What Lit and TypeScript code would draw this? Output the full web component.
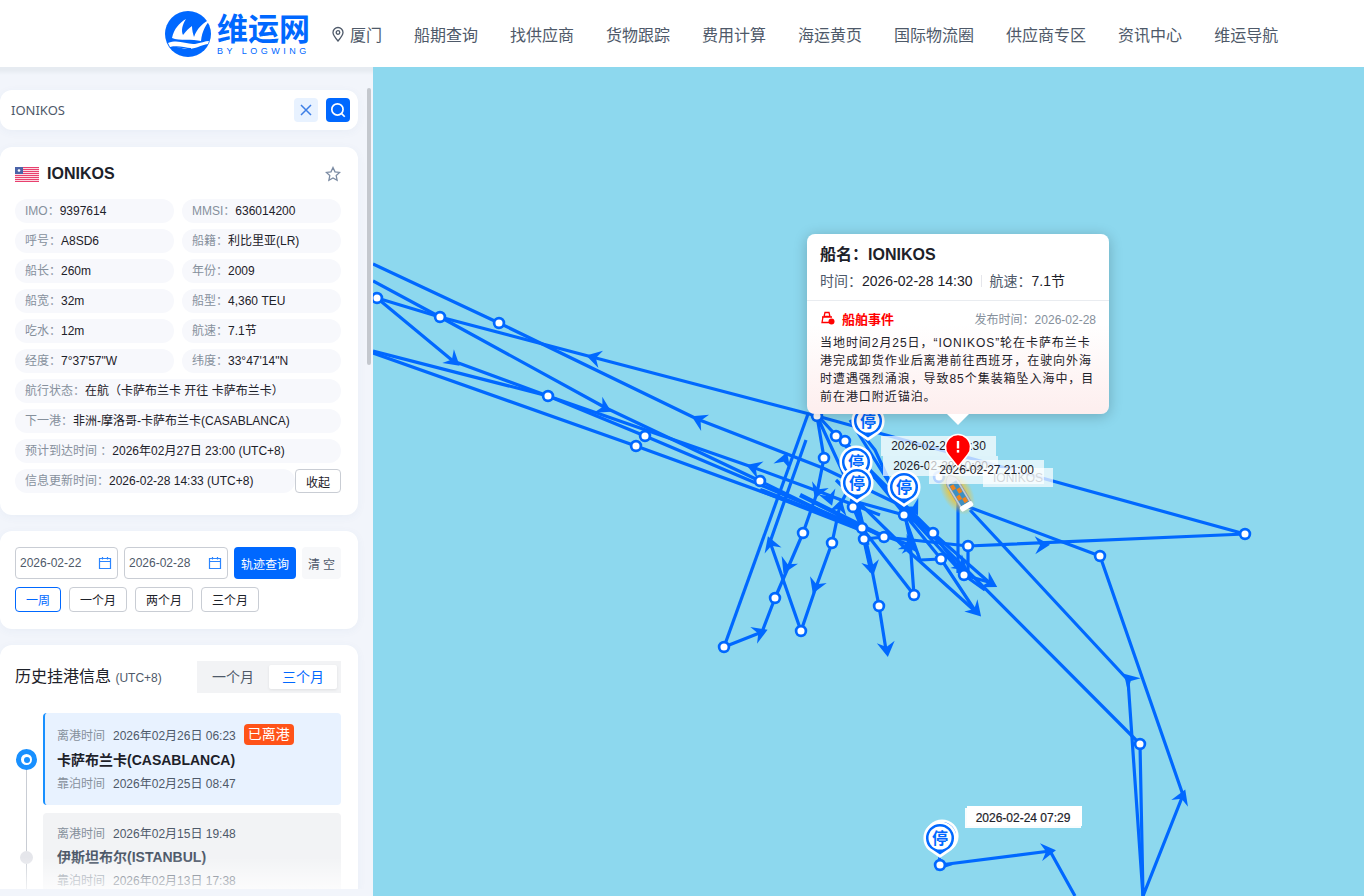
import { LitElement, html, css, svg } from "lit";
import { customElement } from "lit/decorators.js";

type P = [number, number];
const polylines: P[][] = [
  [[373,264],[499,323],[697,419],[823,468],[900,505]],
  [[373,281],[440,317],[606,408],[760,481],[860,530]],
  [[377,298],[440,317],[592,357],[817,416],[1245,534],[968,546],[884,537],[864,539]],
  [[377,298],[453,361],[548,396],[645,436],[862,528]],
  [[373,351],[548,396],[752,467],[823,493],[880,515]],
  [[373,353],[636,446],[840,520],[910,545]],
  [[958,503],[1100,556],[1183,795],[1143,896],[1140,744],[905,508],[850,420]],
  [[970,510],[1128,680],[1143,896]],
  [[958,480],[958,573]],
  [[968,546],[968,575]],
  [[940,865],[1050,851],[1075,896]],
  [[724,647],[808,414]],
  [[724,647],[762,632],[775,598],[803,533],[817,493],[824,458],[817,416]],
  [[801,631],[770,542],[806,440]],
  [[801,631],[815,590],[832,543],[840,505],[848,490]],
  [[853,507],[862,528],[872,570],[879,606],[886,650]],
  [[857,500],[865,545],[871,572]],
  [[914,595],[862,528]],
  [[914,595],[910,540],[905,515],[875,450],[855,425]],
  [[820,418],[964,575],[992,583]],
  [[836,436],[933,533],[991,584]],
  [[845,441],[941,559],[976,612]],
  [[850,500],[904,515],[933,533],[964,575],[985,590]],
  [[836,480],[905,548],[976,612]],
  [[817,416],[858,505],[868,545]],
  [[904,515],[920,560],[941,559]],
];
const thick: P[][] = [
  [[760,490],[862,530]],
  [[800,495],[880,535]],
  [[856,500],[872,570]],
];
const arrows: [number, number, number][] = [
  [455,362,40],[606,409,28],[697,419,206],[592,357,195],[1044,545,-2],[762,632,-22],
  [1128,678,226],[1183,795,-68],[1050,851,-7],[786,568,115],[770,542,250],[815,588,112],
  [817,493,112],[785,458,-70],[840,505,-75],[752,467,200],[872,570,78],[887,651,82],
  [911,545,-88],[977,612,47],[992,584,30],[910,546,30],[940,866,130],[830,500,70],
  [847,476,200],[915,510,60],[963,567,40],
];
const nodes: P[] = [
  [377,298],[440,317],[499,323],[548,396],[645,436],[636,446],[760,481],[817,416],[836,436],[845,441],
  [824,458],[853,507],[862,528],[864,539],[884,537],[904,515],[933,533],[941,559],[964,575],[968,546],
  [914,595],[879,606],[832,543],[803,533],[775,598],[801,631],[724,647],[1100,556],[1245,534],[1140,744],[940,865],[939,477],
];
const pins: P[] = [[868,441],[856,482],[857,503],[904,507],[942,856],[940,858]];

const rows: [string, string][][] = [
  [["IMO：", "9397614"], ["MMSI：", "636014200"]],
  [["呼号：", "A8SD6"], ["船籍：", "利比里亚(LR)"]],
  [["船长：", "260m"], ["年份：", "2009"]],
  [["船宽：", "32m"], ["船型：", "4,360 TEU"]],
  [["吃水：", "12m"], ["航速：", "7.1节"]],
  [["经度：", "7°37'57\"W"], ["纬度：", "33°47'14\"N"]],
];
const nav = ["船期查询","找供应商","货物跟踪","费用计算","海运黄页","国际物流圈","供应商专区","资讯中心","维运导航"];

const calendar = html`<svg class="cal" viewBox="0 0 14 14" width="14" height="14"><path d="M1.500 2.500h11v10h-11zM1.500 5.500h11M4.500 1v2.500M9.500 1v2.500" fill="none" stroke="#2b85ff" stroke-width="1.200"/></svg>`;

@customElement("app-root")
export class AppRoot extends LitElement {
  static styles = css`
    :host { display: block; height: 896px; overflow: hidden; font-family: "Liberation Sans", "Noto Sans CJK SC", sans-serif; color: #1d2129; background: #f2f5fb; }
    * { box-sizing: border-box; }
    .top { height: 67px; background: #fff; display: flex; align-items: center; padding-left: 165px; }
    .logo { display: flex; align-items: center; width: 166px; gap: 6px; }
    .brand { display: flex; flex-direction: column; color: #0068ff; width: 93px; margin-top: 4px; }
    .brand b { font-size: 31px; line-height: 27px; font-weight: 700; white-space: nowrap; }
    .brand small { font-size: 9px; line-height: 10px; letter-spacing: 3.500px; white-space: nowrap; margin-top: 3px; }
    .city { display: flex; align-items: center; gap: 5px; width: 83px; font-size: 16px; color: #4e5969; }
    .nav { display: flex; gap: 32px; font-size: 16px; color: #4e5969; white-space: nowrap; }
    .main { display: grid; grid-template-columns: 373px 1fr; height: 829px; }
    .side { position: relative; background: linear-gradient(#e6ebf1 0 3px, #f2f5fb 8px); padding: 23px 15px 7px 0; display: flex; flex-direction: column; gap: 17px; height: 829px; overflow: hidden; }
    .thumb { position: absolute; left: 367px; top: 21px; width: 4px; height: 277px; background: #c4c8ce; border-radius: 2px; }
    .card { background: #fff; border-radius: 12px; width: 358px; flex: none; box-shadow: 0 2px 10px rgba(60,90,160,.05); }
    .search { height: 40px; display: flex; align-items: center; padding: 0 8px 0 11px; font-size: 13px; color: #4e5969; font-family: "Noto Sans", sans-serif; }
    .search span { flex: 1; }
    .ibtn { width: 24px; height: 24px; border-radius: 4px; display: flex; align-items: center; justify-content: center; margin-left: 8px; }
    .ibtn.x { background: #e8f2ff; }
    .ibtn.go { background: #0068ff; }
    .info { height: 368px; padding: 17px 16px 0 15px; }
    .name { display: flex; align-items: center; height: 20px; font-size: 16px; font-weight: 700; gap: 8px; margin-bottom: 15px; }
    .name span { flex: 1; }
    .star { margin-right: 1px; }
    .grid { display: grid; grid-template-columns: 159px 159px; column-gap: 8px; row-gap: 6px; }
    .pill { height: 24px; line-height: 24px; border-radius: 12px; background: #f7f8fc; padding: 0 10px; font-size: 12px; white-space: nowrap; }
    .pill i { font-style: normal; color: #86909c; }
    .wide { grid-column: 1 / 3; }
    .lastrow { display: flex; grid-column: 1 / 3; }
    .lastrow .pill { width: 280px; }
    .fold { width: 46px; height: 24px; border: 1px solid #c9cdd4; border-radius: 4px; background: #fff; font-size: 12px; display: flex; align-items: center; justify-content: center; }
    .query { height: 98px; padding: 16px 16px 0 15px; }
    .qrow { display: flex; gap: 6px; height: 32px; }
    .date { height: 32px; border: 1px solid #c9cdd4; border-radius: 4px; font-size: 12px; color: #4e5969; display: flex; align-items: center; justify-content: space-between; padding: 0 5px 0 4px; }
    .date.a { width: 103px; }
    .date.b { width: 104px; }
    .primary { width: 62px; border-radius: 4px; background: #0068ff; color: #fff; font-size: 12px; display: flex; align-items: center; justify-content: center; }
    .clear { width: 39px; background: #f7f8fa; border-radius: 4px; font-size: 12px; color: #4e5969; display: flex; align-items: center; justify-content: center; letter-spacing: 3px; padding-left: 3px; }
    .quick { display: flex; gap: 8px; margin-top: 8px; }
    .quick span { height: 25px; border: 1px solid #c9cdd4; border-radius: 4px; font-size: 12px; width: 58px; display: flex; align-items: center; justify-content: center; color: #1d2129; }
    .quick .on { width: 46px; border-color: #0068ff; color: #0068ff; }
    .history { flex: 1; min-height: 0; overflow: hidden; padding: 16px 17px 0 15px; border-radius: 12px 12px 0 0; }
    .hhead { display: flex; align-items: center; justify-content: space-between; height: 32px; }
    .htitle { font-size: 16px; color: #1d2129; margin-top: -4px; }
    .htitle small { font-size: 12px; color: #4e5969; }
    .tabs { width: 144px; height: 32px; background: #f2f3f5; display: flex; align-items: center; font-size: 14px; color: #4e5969; padding: 4px 4px 4px 0; }
    .tabs span { flex: 1; text-align: center; height: 24px; line-height: 24px; }
    .tabs .on { background: #fff; color: #0068ff; flex: none; width: 68px; margin-left: auto; border-radius: 2px; box-shadow: 0 1px 3px rgba(0,0,0,.08); }
    .tl { display: grid; grid-template-columns: 28px 1fr; margin-top: 20px; }
    .rail { position: relative; }
    .trip { background: #f2f3f5; border-radius: 4px; height: 92px; margin-bottom: 8px; padding: 7px 14px; font-size: 12px; color: #4e5969; }
    .trip.cur { background: #e8f2ff; border-left: 2px solid #1890ff; padding: 9px 14px 0 12px; }
    .trip div { height: 24px; display: flex; align-items: center; white-space: nowrap; }
    .trip .l { color: #86909c; margin-right: 8px; }
    .trip .port { font-size: 14px; font-weight: 700; color: #1d2129; height: 25px; }
    .trip.old .port { color: #4e5969; height: 24px; }
    .trip .low { height: 22px; }
    .tag { background: #ff5319; color: #fff; font-size: 14px; border-radius: 4px; padding: 0 4px; height: 21px; line-height: 21px; margin-left: 8px; }
    .railline { position: absolute; left: 11px; top: 46px; bottom: 0; width: 1px; background: #c9cdd4; }
    .dot { position: absolute; border-radius: 50%; }
    .dot.a { left: 1px; top: 36px; width: 21px; height: 21px; border: 5px solid #1890ff; background: #fff; }
    .dot.a::after { content: ""; position: absolute; left: 2.500px; top: 2.500px; width: 6px; height: 6px; background: #1890ff; border-radius: 50%; }
    .dot.b { left: 5px; top: 138px; width: 13px; height: 13px; background: #e5e6eb; }
    .fade { position: absolute; left: 0; top: 790px; width: 347px; height: 32px; background: linear-gradient(rgba(255,255,255,0), rgba(255,255,255,.75)); }
    .strip { position: absolute; left: 0; right: 0; bottom: 0; height: 7px; background: #f2f5fb; }
    .map { position: relative; background: #8dd8ee; overflow: hidden; height: 829px; }
    .map svg.lines { position: absolute; left: -373px; top: -67px; width: 1364px; height: 896px; }
    .pintext { font-family: "Noto Sans CJK SC", sans-serif; font-size: 16px; font-weight: 700; fill: #0068ff; text-anchor: middle; }
    .lbl { position: absolute; background: rgba(255,255,255,.7); font-size: 12px; height: 20px; line-height: 20px; text-align: center; color: #1d2129; white-space: nowrap; }
    .lbl.grey { color: #6b7785; }
    .lbl.ghost { background: #fff; color: #d9dde2; }
    .lbl.white { background: rgba(255,255,255,.94); color: #1d2129; line-height: 21px; -webkit-text-stroke: .2px #1d2129; }
    .pop { position: absolute; left: 434px; top: 167px; width: 302px; height: 180px; border-radius: 8px; background: linear-gradient(#fff 0, #fff 90px, #fdeeee 100%); box-shadow: 0 2px 14px rgba(0,0,0,.22); padding: 11px 13px; }
    .pop::after { content: ""; position: absolute; left: 140px; bottom: -11px; border: 11px solid transparent; border-bottom: 0; border-top-color: #fff; }
    .pop h4 { margin: 0; font-size: 16px; line-height: 20px; font-weight: 700; color: #1d2129; }
    .pmeta { font-size: 14px; color: #1d2129; line-height: 18px; margin-top: 7px; display: flex; align-items: center; white-space: nowrap; }
    .pmeta i { font-style: normal; color: #4e5969; }
    .sep { width: 1px; height: 12px; background: #e5e6eb; margin: 0 8px; }
    .hr { height: 1px; background: #e9ecf0; margin: 10px -13px 0; }
    .ev { display: flex; align-items: center; margin-top: 8px; height: 18px; white-space: nowrap; }
    .ev b { color: #f00; font-size: 13px; margin-left: 7px; flex: 1; }
    .ev small { color: #86909c; font-size: 12px; }
    .pop p { margin: 7px 0 0; font-size: 12px; line-height: 18px; color: #1d2129; letter-spacing: .95px; width: 278px; }
  `;

  arrow(a: [number, number, number]) {
    return svg`<polygon points="6,0 -9,-9 -4,0 -9,9" fill="#0068ff" transform="translate(${a[0]} ${a[1]}) rotate(${a[2]})"/>`;
  }

  pin(p: P) {
    const [x, y] = p;
    return svg`<g transform="translate(${x} ${y})">
      <path d="M0 0 L-11.500 -8 A16.600 16.600 0 1 1 11.500 -8 Z" fill="#fff"/>
      <path d="M0 -3.500 L-9.500 -9.700 A14 14 0 1 1 9.500 -9.700 Z" fill="#0068ff"/>
      <circle cx="0" cy="-20" r="11.500" fill="#fff"/>
      <text class="pintext" x="0" y="-14">停</text>
    </g>`;
  }

  render() {
    return html`
      <div class="top">
        <div class="logo">
          <svg width="46" height="46" viewBox="0 0 46 46" style="overflow:visible;flex:none">
            <circle cx="23" cy="23" r="23" fill="#0068ff"/>
            <path d="M7 27C9 18 14 12 21 8C17 14 16 20 18 24C21 20 24 17 27 15C27 19 28 23 29 26C32 17 38 12 47 7C41 13 37 20 36 30C28 28 14 30 7 27Z" fill="#fff"/>
            <path d="M3 32C14 28 22 34 30 33C36 32 40 30 44 30L43 33C36 34 30 38 24 38C16 38 10 34 5 36Z" fill="#fff"/>
            <path d="M6 36.500C14 34 20 38 26 37.500" fill="none" stroke="#0068ff" stroke-width="1.200"/>
          </svg>
          <div class="brand"><b>维运网</b><small>BY LOGWING</small></div>
        </div>
        <div class="city">
          <svg width="14" height="16" viewBox="0 0 14 16"><path d="M7 15C4 11.500 2 9 2 6.500a5 5 0 0 1 10 0C12 9 10 11.500 7 15Z" fill="none" stroke="#4e5969" stroke-width="1.300"/><circle cx="7" cy="6.500" r="1.800" fill="none" stroke="#4e5969" stroke-width="1.300"/></svg>
          厦门
        </div>
        <div class="nav">${nav.map((n) => html`<span>${n}</span>`)}</div>
      </div>
      <div class="main">
        <div class="side">
          <div class="card search">
            <span>IONIKOS</span>
            <div class="ibtn x"><svg width="12" height="12" viewBox="0 0 12 12"><path d="M1 1l10 10M11 1L1 11" stroke="#3d7fe6" stroke-width="1.500"/></svg></div>
            <div class="ibtn go"><svg width="18" height="18" viewBox="0 0 16 16"><circle cx="7.500" cy="7.500" r="5" fill="none" stroke="#fff" stroke-width="1.500"/><path d="M11 11l3 3" stroke="#fff" stroke-width="1.500"/></svg></div>
          </div>
          <div class="card info">
            <div class="name">
              <svg width="24" height="15" viewBox="0 0 24 15">
                <rect width="24" height="15" fill="#fff"/>
                ${[0,2,4,6,8,10,12,14].map((y) => svg`<rect y="${y}" width="24" height="1.200" fill="#e8406e"/>`)}
                <rect width="8" height="7" fill="#4a63a8"/><circle cx="4" cy="3.500" r="1.300" fill="#fff"/>
              </svg>
              <span>IONIKOS</span>
              <svg class="star" width="16" height="16" viewBox="0 0 16 16"><path d="M8 1.500l2 4.300 4.700.6-3.500 3.200.9 4.700L8 12l-4.100 2.300.9-4.700L1.300 6.400 6 5.800Z" fill="none" stroke="#7b8ba3" stroke-width="1.300"/></svg>
            </div>
            <div class="grid">
              ${rows.flat().map(([k, v]) => html`<div class="pill"><i>${k}</i>${v}</div>`)}
              <div class="pill wide"><i>航行状态：</i>在航（卡萨布兰卡 开往 卡萨布兰卡）</div>
              <div class="pill wide"><i>下一港：</i>非洲-摩洛哥-卡萨布兰卡(CASABLANCA)</div>
              <div class="pill wide"><i>预计到达时间 ：</i>2026年02月27日 23:00 (UTC+8)</div>
              <div class="lastrow">
                <div class="pill"><i>信息更新时间：</i>2026-02-28 14:33 (UTC+8)</div>
                <div class="fold">收起</div>
              </div>
            </div>
          </div>
          <div class="card query" style="margin-top:-1px">
            <div class="qrow">
              <div class="date a">2026-02-22${calendar}</div>
              <div class="date b">2026-02-28${calendar}</div>
              <div class="primary">轨迹查询</div>
              <div class="clear">清空</div>
            </div>
            <div class="quick"><span class="on">一周</span><span>一个月</span><span>两个月</span><span>三个月</span></div>
          </div>
          <div class="card history" style="margin-top:-1px">
            <div class="hhead">
              <div class="htitle">历史挂港信息 <small>(UTC+8)</small></div>
              <div class="tabs"><span>一个月</span><span class="on">三个月</span></div>
            </div>
            <div class="tl">
              <div class="rail"><div class="railline"></div><div class="dot a"></div><div class="dot b"></div></div>
              <div>
                <div class="trip cur">
                  <div><span class="l">离港时间</span>2026年02月26日 06:23<span class="tag">已离港</span></div>
                  <div class="port">卡萨布兰卡(CASABLANCA)</div>
                  <div class="low"><span class="l">靠泊时间</span>2026年02月25日 08:47</div>
                </div>
                <div class="trip old">
                  <div><span class="l">离港时间</span>2026年02月15日 19:48</div>
                  <div class="port">伊斯坦布尔(ISTANBUL)</div>
                  <div class="low"><span class="l">靠泊时间</span>2026年02月13日 17:38</div>
                </div>
              </div>
            </div>
          </div>
          <div class="fade"></div>
          <div class="strip"></div>
          <div class="thumb"></div>
        </div>
        <div class="map">
          <svg class="lines" viewBox="0 0 1364 896">
            ${polylines.map((l) => svg`<polyline points="${l.map((p) => p.join(",")).join(" ")}" fill="none" stroke="#0068ff" stroke-width="3.200" stroke-linejoin="round"/>`)}
            ${thick.map((l) => svg`<polyline points="${l.map((p) => p.join(",")).join(" ")}" fill="none" stroke="#0068ff" stroke-width="4.500"/>`)}
            ${arrows.map((a) => this.arrow(a))}
            ${nodes.map((n) => svg`<circle cx="${n[0]}" cy="${n[1]}" r="4.900" fill="#fff" stroke="#0068ff" stroke-width="2.700"/>`)}
            <defs><radialGradient id="glow"><stop offset="45%" stop-color="#f2c230" stop-opacity=".85"/><stop offset="100%" stop-color="#f2c230" stop-opacity="0"/></radialGradient></defs>
            <ellipse cx="957" cy="492" rx="15" ry="25" fill="url(#glow)" transform="rotate(-30 957 492)"/>
            ${pins.slice(0, 2).map((p) => this.pin(p))}
          </svg>
          <div class="lbl" style="left:508px;top:369px;width:115px;background:rgba(255,255,255,.72)">2026-02-28 14:30</div>
          <div class="lbl" style="left:510px;top:389px;width:115px">2026-02-28 10:00</div>
          <svg class="lines" viewBox="0 0 1364 896">
            ${pins.slice(2).map((p) => this.pin(p))}
            <g transform="rotate(-31 958 492)">
              <path d="M951.500 482 Q952 476 958 473 Q964 476 964.500 482 L964.500 510 L951.500 510 Z" fill="#c3ccd4" stroke="#8d99a5" stroke-width=".8"/>
              <rect x="953.500" y="481" width="9" height="25" fill="#3f8fc0"/>
              <rect x="954" y="483" width="4" height="5" fill="#ee8420"/><rect x="958" y="489" width="4" height="5" fill="#ee8420"/>
              <rect x="954" y="495" width="4" height="5" fill="#ee8420"/><rect x="958" y="500" width="4" height="5" fill="#ee8420"/>
              <rect x="951" y="506" width="14" height="5.500" rx="2" fill="#fff"/>
            </g>
          </svg>
          <div class="lbl grey" style="left:610px;top:401px;width:70px;height:19px;line-height:20px">IONIKOS</div>
          <div class="lbl" style="left:556px;top:393px;width:115px;height:24px;line-height:20px">2026-02-27 21:00</div>
          <div class="lbl ghost" style="left:594px;top:739px;width:115px">2026-02-25 07:50</div>
          <div class="lbl white" style="left:592px;top:741px;width:116px">2026-02-24 07:29</div>
          <svg class="lines" viewBox="0 0 1364 896">
            <g transform="translate(958 467)">
              <path d="M0 0 L-9.800 -12.200 A12.500 12.500 0 1 1 9.800 -12.200 Z" fill="#f00" stroke="#fff" stroke-width="1.500"/>
              <rect x="-1.200" y="-26" width="2.400" height="7.500" fill="#fff"/><rect x="-1.200" y="-17" width="2.400" height="2.600" fill="#fff"/>
            </g>
          </svg>
          <div class="pop">
            <h4>船名：IONIKOS</h4>
            <div class="pmeta"><i>时间：</i>2026-02-28 14:30<span class="sep"></span><i>航速：</i>7.1节</div>
            <div class="hr"></div>
            <div class="ev">
              <svg width="15" height="14" viewBox="0 0 15 14"><path d="M5 1.500h4l1 4H4ZM2 6h10M3 6l-1 5.500h7" fill="none" stroke="#f00" stroke-width="1.300"/><circle cx="11.500" cy="10.500" r="3" fill="#f00"/></svg>
              <b>船舶事件</b><small>发布时间：2026-02-28</small>
            </div>
            <p>当地时间2月25日，“IONIKOS”轮在卡萨布兰卡港完成卸货作业后离港前往西班牙，在驶向外海时遭遇强烈涌浪，导致85个集装箱坠入海中，目前在港口附近锚泊。</p>
          </div>
        </div>
      </div>
    `;
  }
}
